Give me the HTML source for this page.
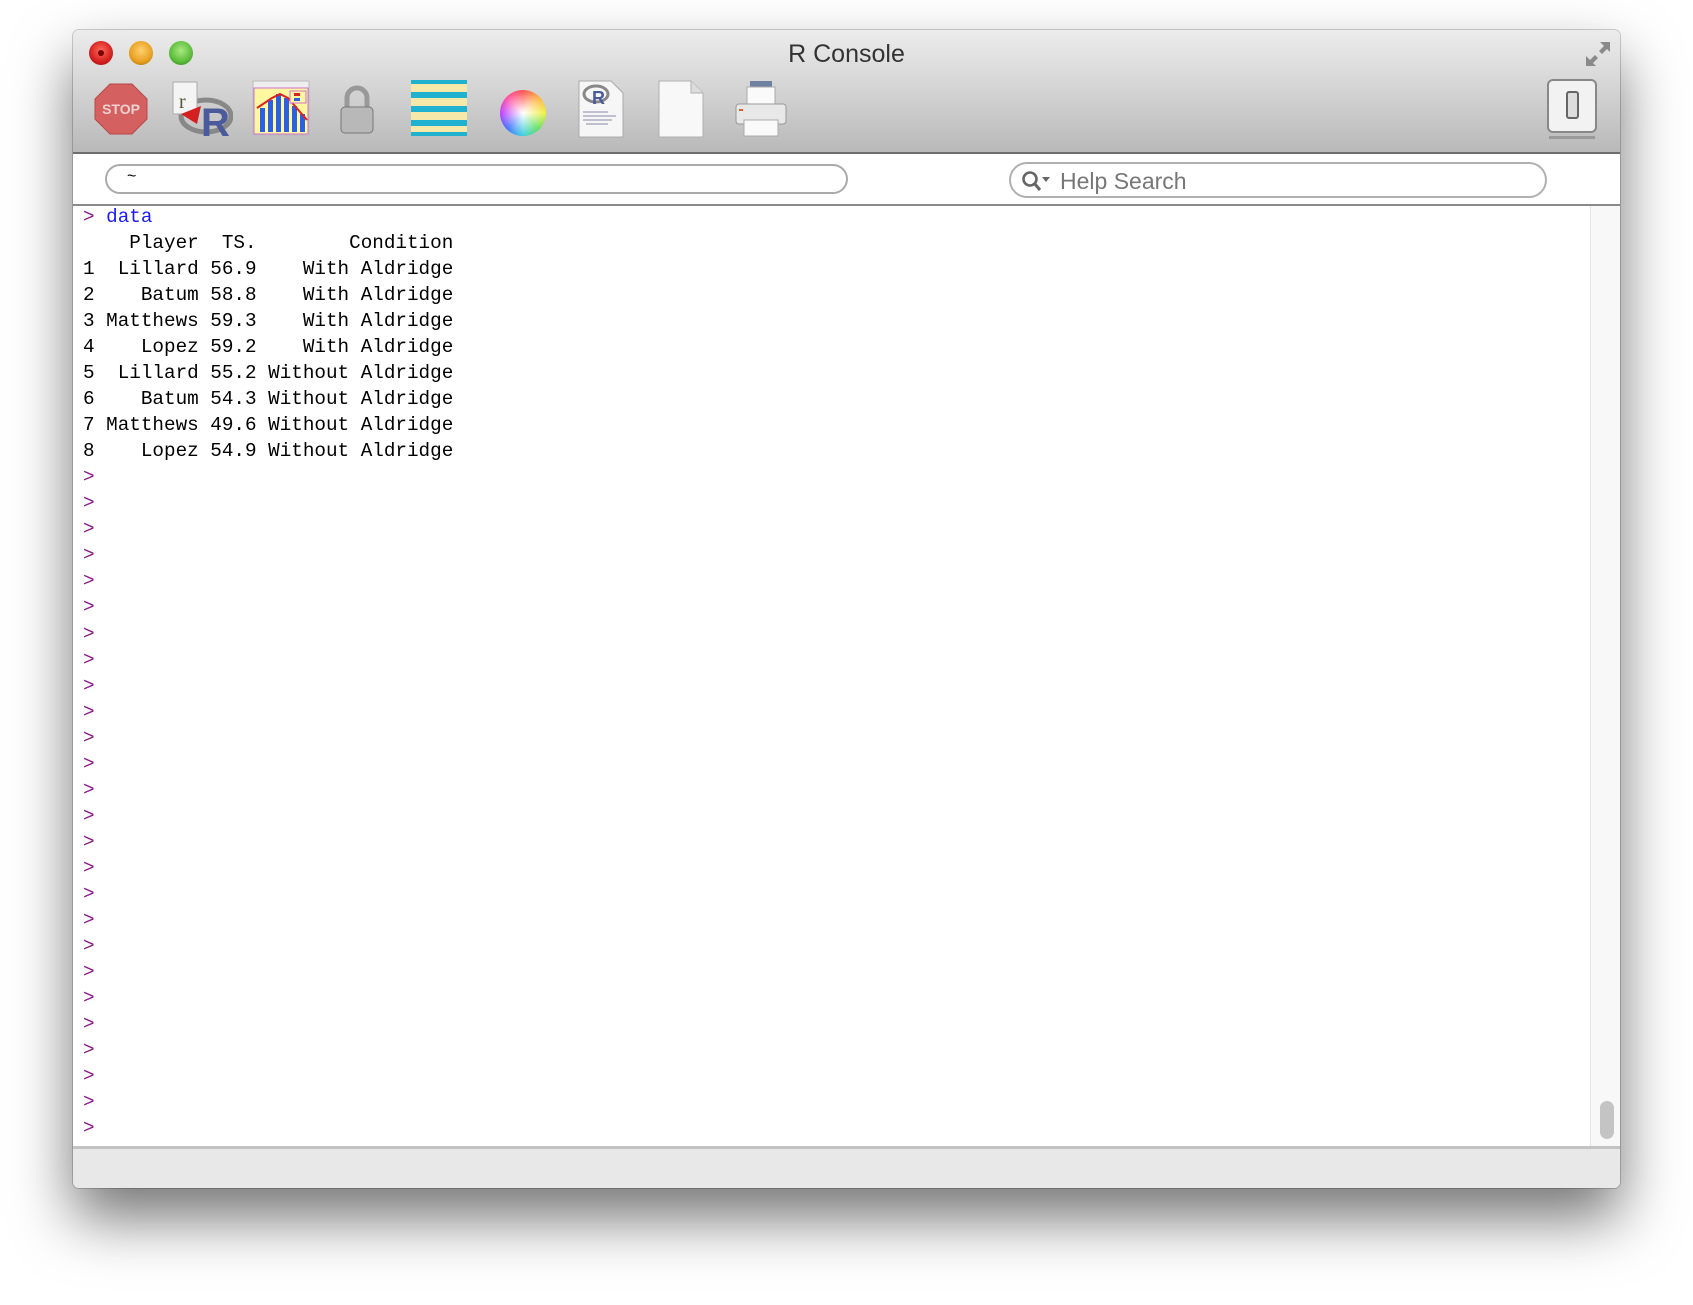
<!DOCTYPE html>
<html><head><meta charset="utf-8"><style>
*{margin:0;padding:0;box-sizing:border-box}
body{width:1693px;height:1305px;background:#fff;position:relative;overflow:hidden;font-family:"Liberation Sans",sans-serif}
.win{position:absolute;left:73px;top:30px;width:1547px;height:1158px;border-radius:6px;background:#fff;box-shadow:0 30px 60px rgba(0,0,0,.55),0 0 0 1px rgba(0,0,0,.18);overflow:hidden}
.tb{position:absolute;left:0;top:0;width:100%;height:124px;background:linear-gradient(#ececec,#d6d6d6 45%,#b9b9b9);border-bottom:2px solid #6e6e6e}
.title{position:absolute;left:0;right:0;top:10px;text-align:center;font-size:25px;color:#333}
.light{position:absolute;top:11px;width:24px;height:24px;border-radius:50%}
.ic{position:absolute}
.pill{position:absolute;border:2px solid #aaa;border-radius:20px;background:#fff}
.con{position:absolute;left:0;top:174px;width:1547px;height:942px;border-top:2px solid #8a8a8a;background:#fff}
pre{position:absolute;left:10px;top:-2px;font-family:"Liberation Mono",monospace;font-size:19.3px;line-height:26.03px;color:#000}
.p{color:#8a1a8a}.b{color:#1a1aff}
.sb{position:absolute;left:1517px;top:176px;width:30px;height:940px;background:#f8f8f8;border-left:1px solid #e4e4e4}
.thumb{position:absolute;left:9px;top:895px;width:14px;height:38px;border-radius:7px;background:#c4c4c4}
.foot{position:absolute;left:0;top:1116px;width:100%;height:42px;background:#e8e8e8;border-top:3px solid #c3c3c3}
</style></head><body>
<div class="win">
 <div class="tb">
  <div class="title">R Console</div>
  <div class="light" style="left:16px;background:radial-gradient(circle at 50% 40%,#ff6a5a,#d42020 60%,#8a1010);"><div style="position:absolute;left:9px;top:9px;width:6px;height:6px;border-radius:50%;background:#700"></div></div>
  <div class="light" style="left:56px;background:radial-gradient(circle at 50% 40%,#ffd070,#e8a020 60%,#9a6000)"></div>
  <div class="light" style="left:96px;background:radial-gradient(circle at 50% 40%,#a8ea80,#5cbc3a 60%,#2a7a10)"></div>
  <svg class="ic" style="left:1509px;top:8px" width="32" height="32" viewBox="0 0 32 32"><path d="M18 4h10v10l-3-3-5 5-3-3 5-5z M4 18v10h10l-3-3 5-5-3-3-5 5z" fill="#8a8a8a"/></svg>
  <svg class="ic" style="left:21px;top:53px" width="54" height="52" viewBox="0 0 54 52"><polygon points="16,1 38,1 53,16 53,36 38,51 16,51 1,36 1,16" fill="#d46060" stroke="#b84848"/><text x="27" y="31" font-size="14" font-weight="bold" fill="#f4d0d0" text-anchor="middle" font-family="Liberation Sans">STOP</text></svg>
  <svg class="ic" style="left:98px;top:50px" width="62" height="58" viewBox="0 0 62 58"><ellipse cx="35" cy="36" rx="25" ry="16" fill="none" stroke="#888" stroke-width="5"/><text x="30" y="56" font-size="40" font-weight="bold" fill="#4a5a9a" font-family="Liberation Sans">R</text><rect x="2" y="2" width="24" height="32" fill="#f4f4f4" stroke="#aaa"/><polygon points="10,34 30,26 26,44" fill="#d42020"/><text x="8" y="28" font-size="20" fill="#553" font-family="Liberation Serif">r</text></svg>
  <svg class="ic" style="left:179px;top:50px" width="58" height="56" viewBox="0 0 58 56"><rect x="1" y="1" width="56" height="54" fill="#eee" stroke="#bbb"/><rect x="2" y="8" width="54" height="46" fill="#fff8a0" stroke="#d070d0"/><g fill="#2a60e8"><rect x="8" y="28" width="5" height="24"/><rect x="16" y="20" width="5" height="32"/><rect x="24" y="14" width="5" height="38"/><rect x="32" y="18" width="5" height="34"/><rect x="40" y="26" width="5" height="26"/><rect x="48" y="34" width="5" height="18"/></g><polyline points="5,28 20,18 28,14 36,18 55,40" fill="none" stroke="#e02020" stroke-width="2"/><rect x="38" y="11" width="16" height="12" fill="#fff8a0" stroke="#d070d0"/><rect x="42" y="13" width="6" height="3" fill="#e02020"/><rect x="42" y="18" width="6" height="3" fill="#2a60e8"/></svg>
  <svg class="ic" style="left:265px;top:55px" width="38" height="50" viewBox="0 0 38 50"><path d="M9 22V13a10 10 0 0 1 20 0v9" fill="none" stroke="#999" stroke-width="5"/><rect x="3" y="22" width="32" height="26" rx="4" fill="#b8b8b8" stroke="#777"/></svg>
  <svg class="ic" style="left:338px;top:50px" width="56" height="58" viewBox="0 0 56 58"><rect x="0" y="0" width="56" height="56" fill="#f6e8a8"/><g fill="#20b0d0"><rect y="0" width="56" height="4"/><rect y="12" width="56" height="6"/><rect y="26" width="56" height="6"/><rect y="40" width="56" height="6"/><rect y="52" width="56" height="4"/></g></svg>
  <div class="ic" style="left:427px;top:60px;width:46px;height:46px;border-radius:50%;background:radial-gradient(circle,#fff 0,rgba(255,255,255,0) 70%),conic-gradient(#ff5050,#ffb040,#f0f040,#60e060,#40d0e0,#4070ff,#c040ff,#ff50a0,#ff5050)"></div>
  <svg class="ic" style="left:505px;top:50px" width="46" height="58" viewBox="0 0 46 58"><path d="M1 1h32l12 12v44H1z" fill="#f6f6f6" stroke="#aaa"/><ellipse cx="18" cy="14" rx="12" ry="8" fill="none" stroke="#888" stroke-width="3"/><text x="14" y="24" font-size="18" font-weight="bold" fill="#4a5a9a" font-family="Liberation Sans">R</text><g stroke="#88a" stroke-width="1"><line x1="5" y1="32" x2="30" y2="32"/><line x1="5" y1="36" x2="38" y2="36"/><line x1="5" y1="40" x2="34" y2="40"/><line x1="8" y1="44" x2="30" y2="44"/></g></svg>
  <svg class="ic" style="left:585px;top:50px" width="46" height="58" viewBox="0 0 46 58"><path d="M1 1h32l12 12v44H1z" fill="#f8f8f8" stroke="#b0b0b0"/><path d="M33 1v12h12" fill="#ddd" stroke="#b0b0b0"/></svg>
  <svg class="ic" style="left:661px;top:50px" width="54" height="58" viewBox="0 0 54 58"><rect x="16" y="1" width="22" height="6" fill="#7080a0"/><rect x="13" y="7" width="28" height="18" fill="#fafafa" stroke="#aaa"/><rect x="2" y="24" width="50" height="20" rx="3" fill="#e8e8e8" stroke="#999"/><rect x="10" y="40" width="34" height="16" fill="#fafafa" stroke="#aaa"/><rect x="5" y="29" width="4" height="2" fill="#e06020"/></svg>
  <svg class="ic" style="left:1473px;top:48px" width="52" height="62" viewBox="0 0 52 62"><rect x="2" y="2" width="48" height="52" rx="5" fill="#f2f2f2" stroke="#888" stroke-width="2"/><rect x="21" y="14" width="11" height="26" rx="2" fill="#ddd" stroke="#666" stroke-width="2"/><rect x="3" y="58" width="46" height="3" fill="#999"/></svg>
 </div>
 <div class="pill" style="left:32px;top:134px;width:743px;height:30px"><span style="position:absolute;left:20px;top:2px;font-size:16px">~</span></div>
 <div class="pill" style="left:936px;top:132px;width:538px;height:36px;border-color:#b0b0b0">
  <svg style="position:absolute;left:10px;top:6px" width="34" height="22" viewBox="0 0 34 22"><circle cx="9" cy="9" r="6.5" fill="none" stroke="#666" stroke-width="2.6"/><line x1="13.5" y1="13.5" x2="19" y2="20" stroke="#666" stroke-width="3"/><polygon points="21,7 29,7 25,12" fill="#666"/></svg>
  <span style="position:absolute;left:49px;top:4px;font-size:23px;color:#777">Help Search</span>
 </div>
 <div class="con"><pre><span class="p">&gt;</span> <span class="b">data</span>
    Player  TS.        Condition
1  Lillard 56.9    With Aldridge
2    Batum 58.8    With Aldridge
3 Matthews 59.3    With Aldridge
4    Lopez 59.2    With Aldridge
5  Lillard 55.2 Without Aldridge
6    Batum 54.3 Without Aldridge
7 Matthews 49.6 Without Aldridge
8    Lopez 54.9 Without Aldridge
<span class="p">&gt;
&gt;
&gt;
&gt;
&gt;
&gt;
&gt;
&gt;
&gt;
&gt;
&gt;
&gt;
&gt;
&gt;
&gt;
&gt;
&gt;
&gt;
&gt;
&gt;
&gt;
&gt;
&gt;
&gt;
&gt;
&gt;</span></pre></div>
 <div class="sb"><div class="thumb"></div></div>
 <div class="foot"></div>
</div>
</body></html>
